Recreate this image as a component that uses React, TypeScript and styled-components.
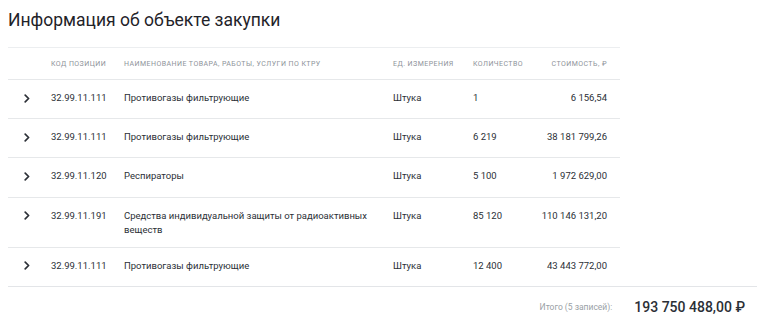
import React from "react";
import styled, { createGlobalStyle } from "styled-components";

interface IRow {
  code: string;
  name: string;
  unit: string;
  qty: string;
  cost: string;
}

const rows: IRow[] = [
  { code: "32.99.11.111", name: "Противогазы фильтрующие", unit: "Штука", qty: "1", cost: "6 156,54" },
  { code: "32.99.11.111", name: "Противогазы фильтрующие", unit: "Штука", qty: "6 219", cost: "38 181 799,26" },
  { code: "32.99.11.120", name: "Респираторы", unit: "Штука", qty: "5 100", cost: "1 972 629,00" },
  {
    code: "32.99.11.191",
    name: "Средства индивидуальной защиты от радиоактивных веществ",
    unit: "Штука",
    qty: "85 120",
    cost: "110 146 131,20",
  },
  { code: "32.99.11.111", name: "Противогазы фильтрующие", unit: "Штука", qty: "12 400", cost: "43 443 772,00" },
];

const Chevron = () => (
  <svg width="6" height="9" viewBox="0 0 6 9" fill="none">
    <path d="M1.2 1.2 L4.6 4.5 L1.2 7.8" stroke="#2b2f36" strokeWidth="1.7" strokeLinecap="round" strokeLinejoin="round" />
  </svg>
);

const App: React.FC = () => {
  return (
    <>
      <GlobalStyle />
      <STDPage>
        <STDTitle>Информация об объекте закупки</STDTitle>
        <STDTable>
          <STDHeadRow>
            <span />
            <STDHeadCell>Код позиции</STDHeadCell>
            <STDHeadCell>Наименование товара, работы, услуги по КТРУ</STDHeadCell>
            <STDHeadCell>Ед. измерения</STDHeadCell>
            <STDHeadCell>Количество</STDHeadCell>
            <STDHeadCell align="right">Стоимость, ₽</STDHeadCell>
          </STDHeadRow>
          {rows.map((row, i) => (
            <STDRow key={i}>
              <STDToggle>
                <Chevron />
              </STDToggle>
              <STDCell>{row.code}</STDCell>
              <STDCell>{row.name}</STDCell>
              <STDCell>{row.unit}</STDCell>
              <STDCell>{row.qty}</STDCell>
              <STDCell align="right">{row.cost}</STDCell>
            </STDRow>
          ))}
        </STDTable>
        <STDFooter>
          <STDTotalLabel>Итого (5 записей):</STDTotalLabel>
          <STDTotalValue>193 750 488,00 ₽</STDTotalValue>
        </STDFooter>
      </STDPage>
    </>
  );
};

export default App;

const GlobalStyle = createGlobalStyle`
  body {
    margin: 0;
    background: #ffffff;
    font-family: Roboto, "Noto Sans", sans-serif;
    color: #2b2f36;
  }
`;

const STDPage = styled.div`
  width: 749px;
  padding: 8px 0 0 8px;
`;

const STDTitle = styled.h2`
  margin: 0;
  height: 39px;
  font-size: 17.5px;
  font-weight: 400;
  line-height: 24px;
  color: #1f2329;
`;

const STDTable = styled.div`
  width: 612px;
  border-top: 1px solid #eceef0;
`;

const columns = "43px 73px 269px 80px 60px 1fr";

const STDHeadRow = styled.div`
  display: grid;
  grid-template-columns: ${columns};
  align-items: center;
  height: 32px;
  box-sizing: border-box;
  border-bottom: 1px solid #e6e8ea;
`;

const STDHeadCell = styled.div<{ align?: string }>`
  font-size: 7px;
  letter-spacing: 0.45px;
  text-transform: uppercase;
  color: #8e939a;
  padding-right: ${({ align }) => (align === "right" ? "13px" : "0")};
  text-align: ${({ align }) => align || "left"};
  white-space: nowrap;
`;

const STDRow = styled.div`
  display: grid;
  grid-template-columns: ${columns};
  align-items: start;
  min-height: 39.2px;
  box-sizing: border-box;
  padding: 11px 0 10px;
  border-bottom: 1px solid #e6e8ea;
`;

const STDToggle = styled.div`
  display: flex;
  align-items: center;
  height: 14px;
  padding-left: 16px;
`;

const STDCell = styled.div<{ align?: string }>`
  font-size: 9.5px;
  line-height: 14px;
  color: #2b2f36;
  padding-right: ${({ align }) => (align === "right" ? "13px" : "22px")};
  text-align: ${({ align }) => align || "left"};
  white-space: ${({ align }) => (align === "right" ? "nowrap" : "normal")};
`;

const STDFooter = styled.div`
  display: flex;
  justify-content: flex-end;
  align-items: center;
  gap: 22px;
  height: 40px;
  padding-right: 12px;
  border-top: 1px solid #e3e5e8;
  margin-top: -1px;
`;

const STDTotalLabel = styled.span`
  font-size: 8.5px;
  color: #9a9fa6;
`;

const STDTotalValue = styled.span`
  font-size: 14px;
  font-weight: 500;
  color: #2b2f36;
`;
